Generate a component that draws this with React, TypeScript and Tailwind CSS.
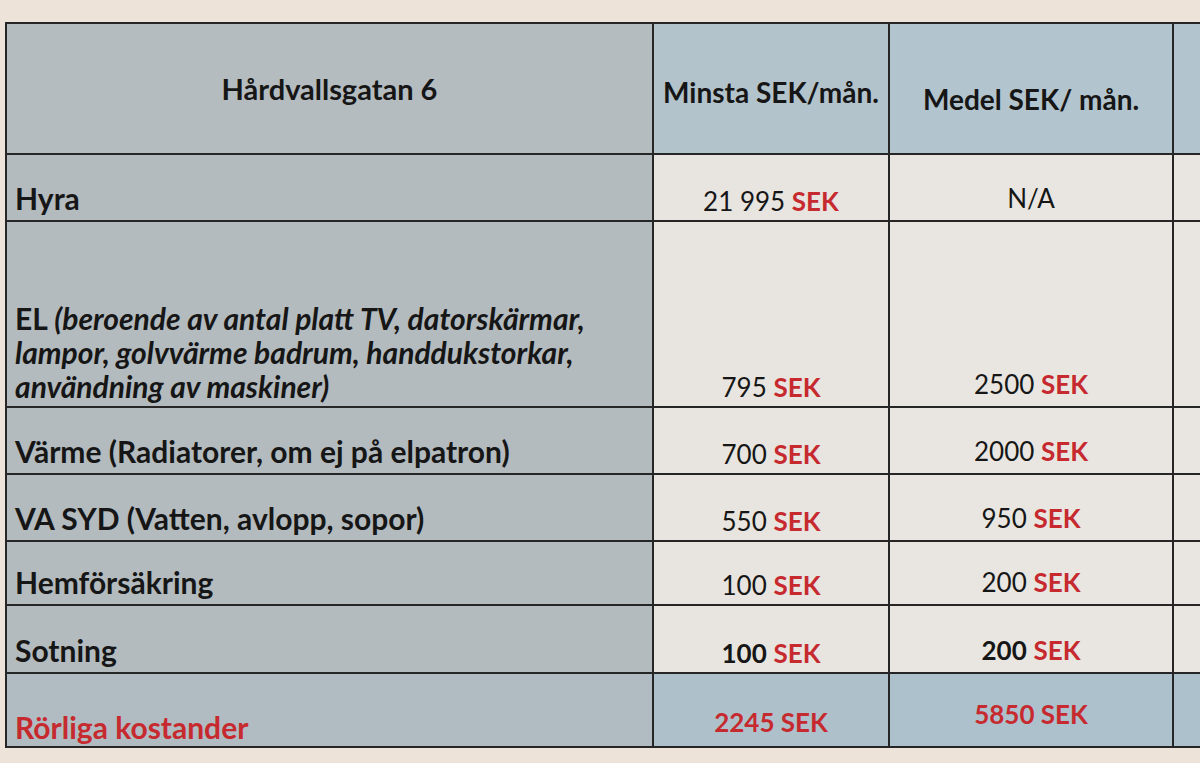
const font = "font-['Lato','Noto_Sans',sans-serif]";

function Val({ n, bold = false }: { n: string; bold?: boolean }) {
  return (
    <span>
      <span className={bold ? "font-bold" : "font-normal"}>{n}</span>{" "}
      <span className="font-bold text-[#c62a2f]">SEK</span>
    </span>
  );
}

const rows: { label: React.ReactNode; a: React.ReactNode; b: React.ReactNode }[] = [
  { label: "Hyra", a: <Val n="21 995" />, b: <span>N/A</span> },
  {
    label: (
      <span className="leading-[34px]">
        EL{" "}
        <em>
          (beroende av antal platt TV, datorskärmar,
          <br />
          lampor, golvvärme badrum, handdukstorkar,
          <br />
          användning av maskiner)
        </em>
      </span>
    ),
    a: <Val n="795" />,
    b: <Val n="2500" />,
  },
  { label: "Värme (Radiatorer, om ej på elpatron)", a: <Val n="700" />, b: <Val n="2000" /> },
  { label: "VA SYD (Vatten, avlopp, sopor)", a: <Val n="550" />, b: <Val n="950" /> },
  { label: "Hemförsäkring", a: <Val n="100" />, b: <Val n="200" /> },
  { label: "Sotning", a: <Val n="100" bold />, b: <Val n="200" bold /> },
];

export default function App() {
  return (
    <main className={`h-[763px] w-[1200px] overflow-hidden bg-[#ede3d9] pt-[22px] pl-[5px] ${font}`}>
      <div className="grid w-[1230px] grid-cols-[645px_234px_282px_1fr] grid-rows-[129px_65px_184px_65px_65px_62px_66px_72px] gap-[2px] border-2 border-[#262626] bg-[#262626] text-[#161616]">
        {/* Header */}
        <div className="flex items-center justify-center bg-[#b4bcc0] text-[29px] font-bold">Hårdvallsgatan 6</div>
        <div className="flex items-center justify-center bg-[#b2c3cc] pt-[6px] text-[28px] font-bold">Minsta SEK/mån.</div>
        <div className="flex items-center justify-center bg-[#b2c4cd] pt-[20px] text-[28px] font-bold">Medel SEK/ mån.</div>
        <div className="bg-[#b2c4cd]" />

        {rows.map((r, i) => (
          <div key={i} className="contents">
            <div className="flex items-end bg-[#b3bbbf] pb-[3px] pl-[8px] text-[30px] font-bold leading-tight">{r.label}</div>
            <div className="flex items-end justify-center bg-[#e8e5e0] pb-[3px] text-[26px] leading-tight">{r.a}</div>
            <div className="flex items-end justify-center bg-[#e9e6e1] pb-[6px] text-[26px] leading-tight">{r.b}</div>
            <div className="bg-[#e9e6e1]" />
          </div>
        ))}

        {/* Total */}
        <div className="flex items-end bg-[#b0bcc2] pl-[8px] text-[30px] font-bold leading-tight text-[#c62a2f]">Rörliga kostander</div>
        <div className="flex items-end justify-center bg-[#aec1cb] pb-[8px] text-[26px] font-bold leading-tight text-[#c62a2f]">2245 SEK</div>
        <div className="flex items-end justify-center bg-[#adc1cc] pb-[16px] text-[26px] font-bold leading-tight text-[#c62a2f]">5850 SEK</div>
        <div className="bg-[#adc1cc]" />
      </div>
    </main>
  );
}
